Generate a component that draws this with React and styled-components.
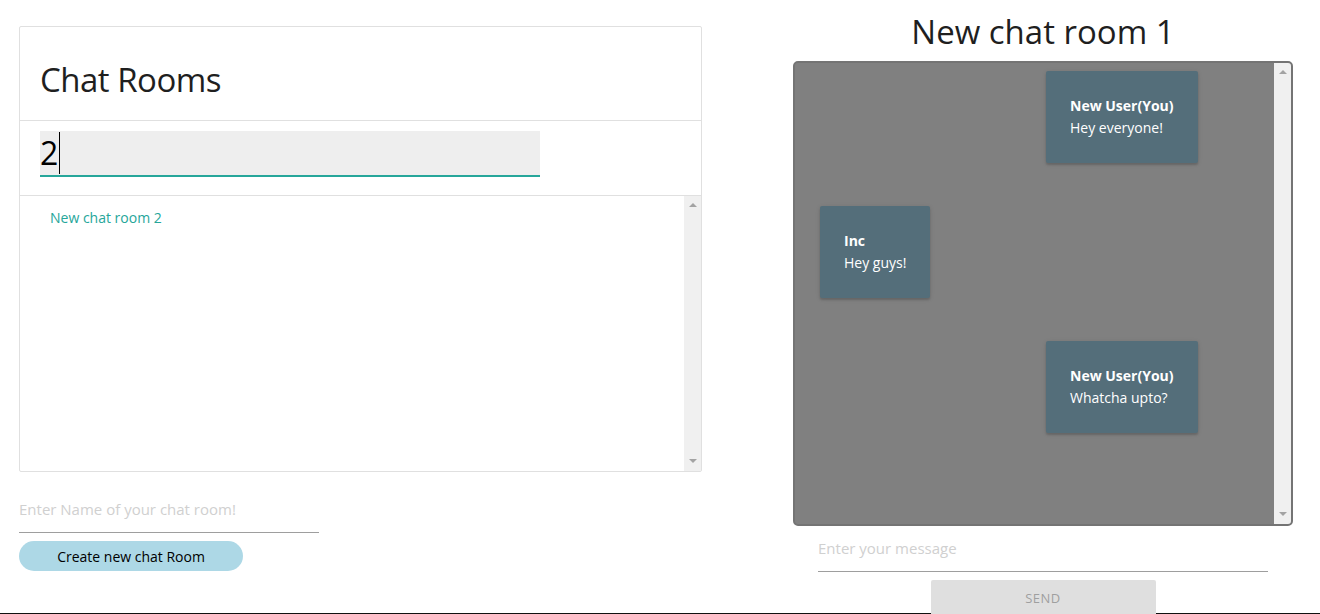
// Imports
import React from 'react';
import styled, { createGlobalStyle } from 'styled-components';

// Data
const rooms = ['New chat room 2'];

const messages = [
	{ id: 1, user: 'New User(You)', text: 'Hey everyone!', mine: true },
	{ id: 2, user: 'Inc', text: 'Hey guys!', mine: false },
	{ id: 3, user: 'New User(You)', text: 'Whatcha upto?', mine: true },
];

// Barre de défilement (dessinée, le navigateur sans tête les masque)
const ScrollRail = () => (
	<Rail>
		<Arrow />
		<Arrow down />
	</Rail>
);

// Composant
const App = () => {
	return (
		<>
			<GlobalStyle />
			<Page>
				<LeftColumn>
					<Collection>
						<CollectionHeader>
							<h4>Chat Rooms</h4>
						</CollectionHeader>
						<SearchRow>
							<SearchField>
								2<Caret />
							</SearchField>
						</SearchRow>
						<Scroller height="275px">
							<RoomList>
								{rooms.map((room) => (
									<RoomItem key={room}>{room}</RoomItem>
								))}
							</RoomList>
							<ScrollRail />
						</Scroller>
					</Collection>
					<LineInput width="300px" placeholder="Enter Name of your chat room!" />
					<CreateButton>Create new chat Room</CreateButton>
				</LeftColumn>

				<RightColumn>
					<RoomTitle>New chat room 1</RoomTitle>
					<ChatBox>
						<Messages>
							{messages.map((msg) => (
								<MessageRow key={msg.id} mine={msg.mine}>
									<Bubble>
										<strong>{msg.user}</strong>
										<span>{msg.text}</span>
									</Bubble>
								</MessageRow>
							))}
						</Messages>
						<ScrollRail />
					</ChatBox>
					<MessageInput width="450px" placeholder="Enter your message" />
					<SendButton disabled>Send</SendButton>
				</RightColumn>
			</Page>
		</>
	);
};

// Styled components
const GlobalStyle = createGlobalStyle`
	html, body {
		margin: 0;
		background: #fff;
		font-family: "Open Sans", "Noto Sans", sans-serif;
		color: rgba(0, 0, 0, 0.87);
		overflow: hidden;
	}
	* {
		box-sizing: border-box;
	}
`;

const Page = styled.div`
	display: flex;
	align-items: flex-start;
	gap: 66px;
	padding-left: 19px;
	height: 614px;
	border-bottom: 1px solid #111;
`;

const Rail = styled.div`
	width: 17px;
	flex: none;
	background: #f0f0f0;
	display: flex;
	flex-direction: column;
	justify-content: space-between;
	align-items: center;
	padding: 7px 0 8px;
`;

const Arrow = styled.span`
	width: 0;
	height: 0;
	border-left: 4px solid transparent;
	border-right: 4px solid transparent;
	${(props) => (props.down
		? 'border-top: 4px solid #a3a3a3;'
		: 'border-bottom: 4px solid #a3a3a3;')}
`;

const LeftColumn = styled.div`
	width: 683px;
	padding-top: 26px;
	display: flex;
	flex-direction: column;
	align-items: flex-start;
`;

const Collection = styled.div`
	width: 100%;
	border: 1px solid #e0e0e0;
	border-radius: 2px;
	display: flex;
	flex-direction: column;
`;

const CollectionHeader = styled.div`
	height: 94px;
	padding: 0 20px;
	border-bottom: 1px solid #e0e0e0;
	display: flex;
	align-items: center;
	h4 {
		margin: 12px 0 0;
		font-size: 33px;
		font-weight: 400;
		letter-spacing: -0.5px;
		color: #1f1f1f;
	}
`;

const SearchRow = styled.div`
	height: 75px;
	padding: 10px 20px 0;
	border-bottom: 1px solid #e0e0e0;
`;

const SearchField = styled.div`
	width: 500px;
	height: 46px;
	background: #eeeeee;
	border-bottom: 2px solid #26a69a;
	display: flex;
	align-items: center;
	font-size: 32px;
	color: #000;
	line-height: 1;
`;

const Caret = styled.span`
	display: inline-block;
	width: 1px;
	height: 42px;
	margin-left: 1px;
	background: #000;
`;

const Scroller = styled.div`
	display: flex;
	height: ${(props) => props.height};
`;

const RoomList = styled.div`
	flex: 1;
	padding: 10px 0;
`;

const RoomItem = styled.div`
	padding: 0 30px;
	line-height: 24px;
	font-size: 14px;
	color: #26a69a;
`;

const LineInput = styled.input`
	width: ${(props) => props.width};
	height: 48px;
	margin: 13px 0 8px;
	padding: 0;
	border: none;
	border-bottom: 1px solid #9e9e9e;
	background: transparent;
	font-family: inherit;
	font-size: 15px;
	outline: none;
	&::placeholder {
		color: #d0d0d0;
	}
`;

const MessageInput = styled(LineInput)`
	margin: -2px 0 8px;
`;

const CreateButton = styled.button`
	width: 224px;
	height: 30px;
	border: none;
	border-radius: 15px;
	background: #add8e6;
	font-family: inherit;
	font-size: 14px;
	color: #000;
	cursor: pointer;
`;

const RightColumn = styled.div`
	width: 550px;
	display: flex;
	flex-direction: column;
	align-items: center;
`;

const RoomTitle = styled.h4`
	margin: 8px 0 0;
	height: 53px;
	font-size: 33px;
	font-weight: 400;
	line-height: 48px;
	color: #1f1f1f;
`;

const ChatBox = styled.div`
	width: 500px;
	height: 465px;
	background: #808080;
	border: 2px solid #747474;
	border-radius: 5px;
	display: flex;
	overflow: hidden;
`;

const Messages = styled.div`
	flex: 1;
	padding-top: 8px;
	display: flex;
	flex-direction: column;
	gap: 43px;
`;

const MessageRow = styled.div`
	display: flex;
	padding-left: ${(props) => (props.mine ? '251px' : '25px')};
`;

const Bubble = styled.div`
	display: flex;
	flex-direction: column;
	padding: 24px;
	background: #546e7a;
	border-radius: 2px;
	box-shadow: 0 2px 2px 0 rgba(0, 0, 0, 0.14), 0 1px 5px 0 rgba(0, 0, 0, 0.12);
	color: #fff;
	font-size: 14px;
	line-height: 22px;
	strong {
		font-weight: 700;
	}
`;

const SendButton = styled.button`
	width: 225px;
	height: 36px;
	border: none;
	border-radius: 2px;
	background: #dfdfdf;
	color: #9f9f9f;
	font-family: inherit;
	font-size: 13px;
	text-transform: uppercase;
	letter-spacing: 0.5px;
`;

// Export
export default App;
